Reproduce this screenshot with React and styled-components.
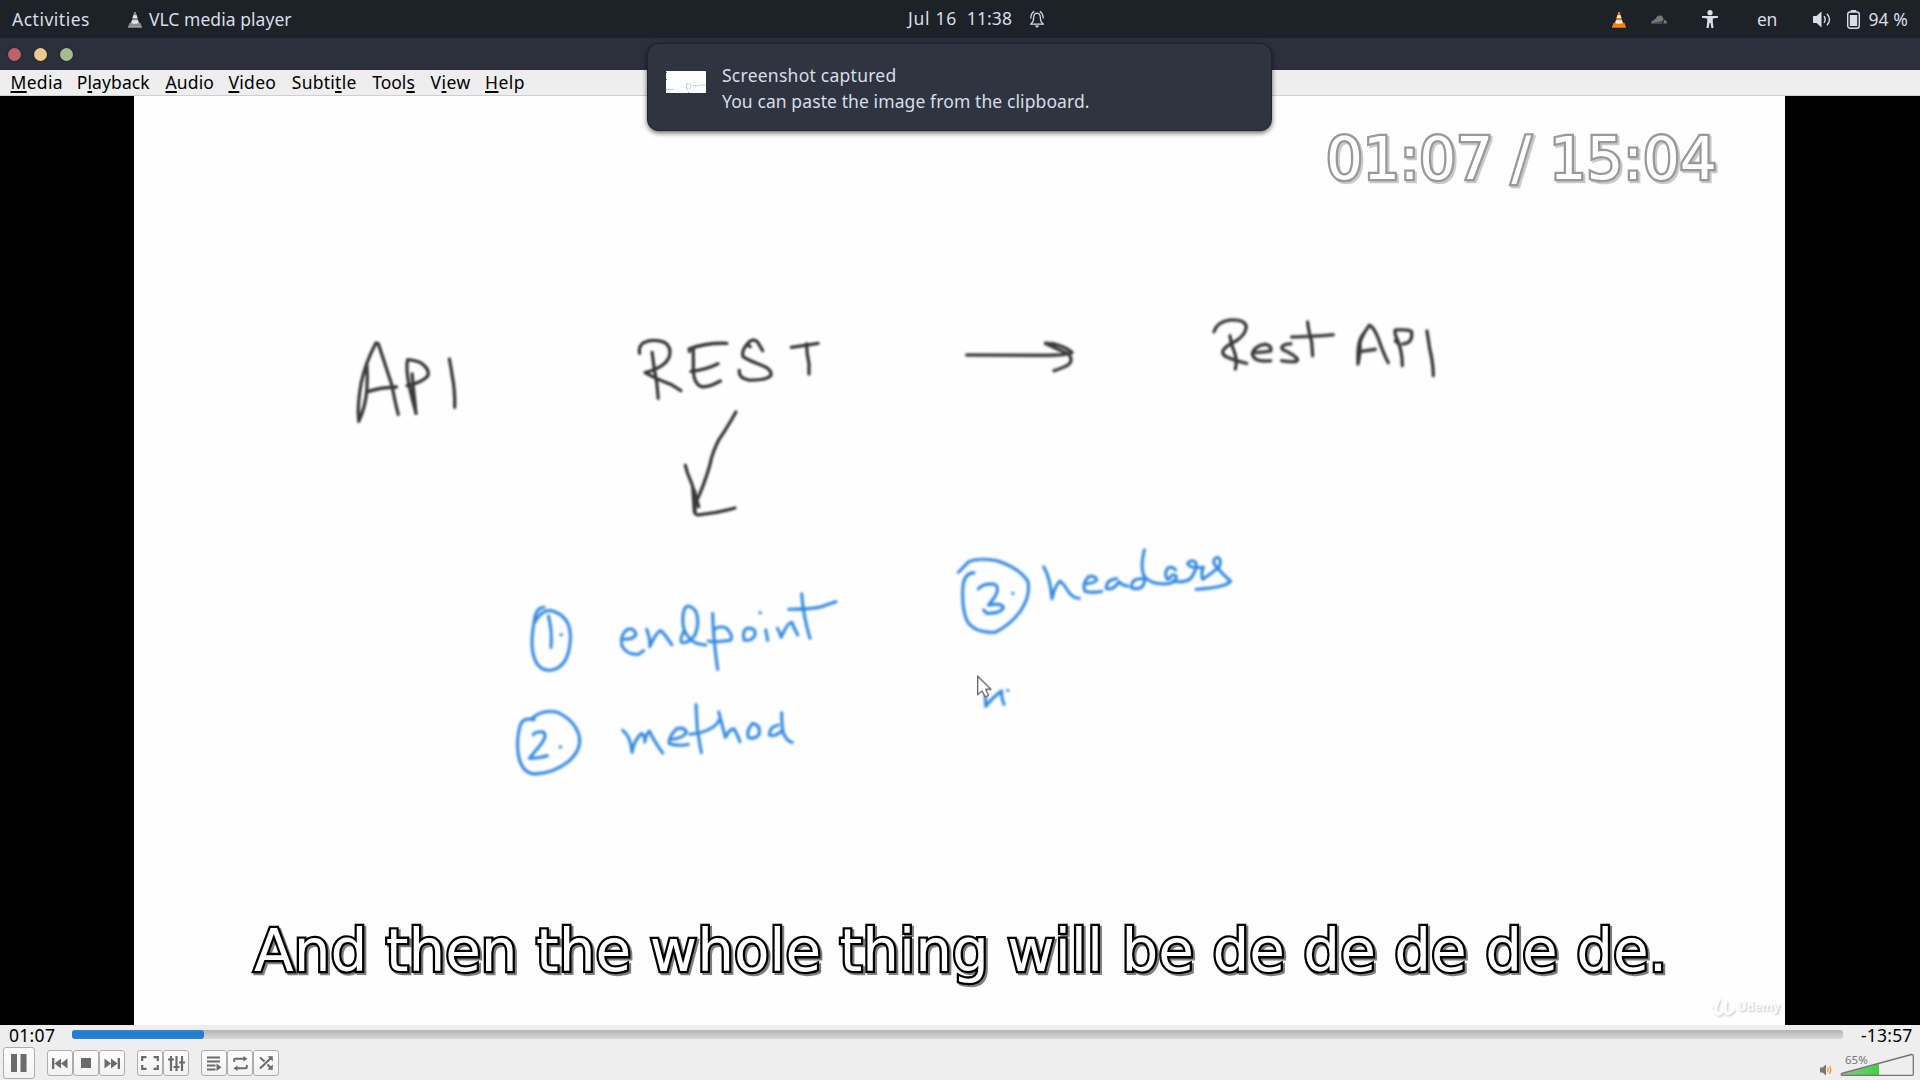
import React from "react";
import styled, { createGlobalStyle } from "styled-components";

const ui = '"Noto Sans", "Open Sans", sans-serif';
const video = '"DejaVu Sans", sans-serif';

const Global = createGlobalStyle`
  * { box-sizing: border-box; }
  html, body { margin: 0; padding: 0; background: #000; overflow: hidden; }
  body { font-family: ${ui}; font-size: 17.5px; }
`;

const Screen = styled.div`
  width: 1920px;
  height: 1080px;
  display: flex;
  flex-direction: column;
  position: relative;
`;

const Label = styled.span`
  letter-spacing: ${(p) => p.$ls || 0}px;
  white-space: pre;
`;

/* ---------- desktop bar ---------- */
const TopBar = styled.header`
  height: 38px;
  flex: none;
  display: grid;
  grid-template-columns: 1fr auto 1fr;
  align-items: center;
  background: #1d2128;
  color: #d8dee9;
  line-height: 36px;
`;
const TopLeft = styled.div`
  display: flex;
  align-items: center;
  padding-left: 12px;
  gap: 7px;
  svg { margin-left: 31px; }
`;
const Clock = styled.div`
  display: flex;
  align-items: center;
  padding: 0 0 2px 32px;
`;
const ClockText = styled.div`
  width: 104px;
  display: flex;
  justify-content: space-between;
`;
const BellSlot = styled.div`
  width: 32px;
  display: flex;
  justify-content: flex-end;
  padding-top: 2px;
`;
const TopRight = styled.div`
  display: flex;
  align-items: center;
  justify-content: flex-end;
  padding-right: 12px;
`;
const Slot = styled.div`
  width: ${(p) => p.$w}px;
  margin-right: ${(p) => p.$mr || 0}px;
  display: flex;
  white-space: nowrap;
`;

/* ---------- window chrome ---------- */
const TitleBar = styled.div`
  height: 32px;
  flex: none;
  background: #2b303b;
  display: flex;
  align-items: center;
  gap: 13px;
  padding-left: 7.5px;
`;
const Light = styled.i`
  width: 13px;
  height: 13px;
  border-radius: 50%;
  background: ${(p) => p.$c};
  box-shadow: 0 0 1px 0.5px rgba(20, 24, 32, 0.6);
`;
const MenuBar = styled.nav`
  height: 26px;
  flex: none;
  background: #eeeeee;
  border-bottom: 1px solid #cfcfcf;
  display: flex;
  padding-left: 10.5px;
  gap: 16px;
  color: #000;
  line-height: 25px;
`;
const MenuItem = styled.span`
  width: ${(p) => p.$w}px;
  letter-spacing: ${(p) => p.$ls}px;
  white-space: nowrap;
  u {
    text-decoration: underline;
    text-decoration-thickness: 2px;
    text-underline-offset: 2px;
    text-decoration-skip-ink: none;
  }
`;

/* ---------- video ---------- */
const Stage = styled.main`
  height: 929px;
  flex: none;
  display: flex;
  justify-content: flex-start;
  padding-left: 134px;
  background: #000;
`;
const Board = styled.div`
  width: 1651px;
  height: 929px;
  background: #fefefe;
  position: relative;
`;
const Ink = styled.svg`
  display: block;
  width: 1651px;
  height: 929px;
  fill: none;
  stroke-linecap: round;
  stroke-linejoin: round;
  path { vector-effect: non-scaling-stroke; }
`;
const Osd = styled.div`
  position: absolute;
  font: 58px/68px ${video};
  color: #fff;
  white-space: nowrap;
  -webkit-text-stroke: 4.6px #000;
  paint-order: stroke fill;
  filter: drop-shadow(2.5px 2.5px 0 rgba(0, 0, 0, 0.5));
`;
const Timer = styled(Osd)`
  left: 1192px;
  top: 29px;
  -webkit-text-stroke-color: #999;
  filter: drop-shadow(2.5px 2.5px 0 #cacaca);
`;
const Caption = styled(Osd)`
  left: 120px;
  top: 821px;
`;
const Watermark = styled.div`
  position: absolute;
  right: 5px;
  bottom: 8px;
  display: flex;
  align-items: center;
  gap: 3px;
  color: #fcfcfc;
  font: bold 12px/20px ${ui};
  text-shadow: 1px 1px 2px rgba(0, 0, 0, 0.25);
  svg { filter: drop-shadow(1px 1px 1px rgba(0, 0, 0, 0.22)); }
`;

/* ---------- notification ---------- */
const Toast = styled.aside`
  position: absolute;
  left: 648px;
  top: 44px;
  width: 623px;
  height: 86px;
  border-radius: 11px;
  background: #2e3440;
  color: #d8dee9;
  box-shadow: 0 0 0 1px #20242c, 0 2px 5px 1px rgba(0, 0, 0, 0.6);
  display: flex;
  padding: 18px;
  gap: 16px;
`;
const Thumb = styled.svg`
  width: 40px;
  height: 22px;
  margin-top: 9px;
  background: #fff;
`;
const ToastText = styled.div`
  display: flex;
  flex-direction: column;
  line-height: 26px;
`;

/* ---------- player controls ---------- */
const Controls = styled.footer`
  height: 55px;
  flex: none;
  background: #eeeeee;
  color: #000;
`;
const SeekRow = styled.div`
  height: 21px;
  display: flex;
  align-items: flex-start;
  line-height: 20px;
  padding-left: 9px;
`;
const Time = styled.span`
  width: ${(p) => p.$w}px;
  letter-spacing: ${(p) => p.$ls}px;
`;
const Track = styled.div`
  width: 1771px;
  height: 9px;
  margin: 5px 18px 0 0;
  border-radius: 3px;
  background: linear-gradient(#b4b4b4, #d8d8d8);
`;
const Progress = styled.div`
  width: 132px;
  height: 9px;
  border-radius: 3px;
  background: linear-gradient(#3a86d0, #1f7bd2 30%, #2a80d0);
`;
const ButtonRow = styled.div`
  height: 34px;
  display: flex;
  align-items: center;
  padding-left: 3px;
  gap: 12px;
`;
const Group = styled.div`display: flex;`;
const Btn = styled.button`
  width: ${(p) => p.$s}px;
  height: ${(p) => p.$s}px;
  padding: 0;
  border: 1px solid #adadad;
  border-radius: 3px;
  background: linear-gradient(#ffffff, #f2f2f2);
  display: flex;
  align-items: center;
  justify-content: center;
  color: #6b6b6b;
`;
const Volume = styled.svg`
  margin-left: auto;
  margin-right: 4px;
  width: 98px;
  height: 28px;
`;

const Cone = ({ a, b, c }) => (
  <svg width="14" height="17" viewBox="0 0 14 17">
    <path d="M1.6 11.8h10.8l1.6 4.4H0z" fill={a} />
    <path d="M6.2 1h1.6l3 11.2q-3.8 2-7.6 0z" fill={a} />
    <path d="M5.3 4.2h3.4l.8 2.8H4.5zM3.9 9.3h6.2l.7 2.6q-3.8 1.8-7.6 0z" fill={b} />
    <path d="M0 15.6h14v.9H0z" fill={c} />
  </svg>
);

const menu = [
  [["", "M", "edia"], 50.3, 0.3],
  [["P", "l", "ayback"], 72.7, 0.1],
  [["", "A", "udio"], 47, 0.15],
  [["", "V", "ideo"], 47.3, 0.3],
  [["Subti", "t", "le"], 64.4, 0.25],
  [["Tool", "s", ""], 42.3, 0],
  [["V", "i", "ew"], 38.5, 0.5],
  [["", "H", "elp"], 42, 0.5],
];

const black = {
  left: [
    "M85 334Q80 290 92 220Q104 160 136 99L143 101L183 225Q192 275 202 313M85 334Q105 290 109 240Q112 200 109 165M112 245Q150 232 197 231",
    "M255 310Q235 240 229 195Q226 160 230 149Q270 153 280 168Q294 183 290 196Q280 215 228 227M243 192Q246 230 251 275L254 310",
    "M353 147Q358 170 362 200Q370 240 369 292",
    "M916 130Q912 108 928 98Q955 85 990 97Q1012 112 1004 140Q992 172 932 188Q965 207 1010 224L1038 242M953 127Q958 175 967 220L971 265",
    "M1064 125L1062 117Q1110 98 1174 100M1075 120L1075 185Q1078 222 1097 229Q1115 235 1155 213M1068 184Q1110 180 1148 161",
    "M1243 110L1236 104M1280 122L1265 96Q1252 84 1240 96Q1216 120 1222 140Q1235 150 1275 165Q1310 178 1304 197Q1290 212 1238 210Q1208 205 1211 181",
    "M1365 112L1444 100M1410 101Q1410 130 1417 160L1417 192",
    "M1201 306Q1180 345 1150 390Q1130 430 1124 465Q1105 530 1085 572M1051 466L1058 490Q1075 530 1082 560L1091 590M1073 530L1078 605Q1080 617 1095 614Q1140 610 1180 599L1198 594M1080 545L1080 608",
  ],
  right: [
    "M80 165L320 166Q375 165 396 158M316 130L340 131Q380 142 396 157M316 130L385 162Q402 180 385 194Q370 203 342 212",
    "M822 95Q832 65 870 60Q915 57 919 80Q916 110 875 130Q835 152 855 168Q880 180 920 190M870 107Q872 130 883 155Q893 180 886 207",
    "M940 157Q970 158 992 153Q997 136 975 133Q945 138 937 160Q940 188 992 182",
    "M1053 131Q1020 133 1027 148Q1065 165 1073 178Q1072 190 1025 182",
    "M1055 111Q1110 110 1180 104M1103 66Q1105 90 1115 125L1118 167",
    "M1254 192L1254 160Q1257 115 1288 76Q1300 78 1315 115Q1330 160 1345 188M1270 102Q1255 120 1254 160M1258 155L1306 148M1254 192Q1262 160 1260 120",
    "M1387 197Q1388 160 1373 120Q1362 98 1366 90Q1405 87 1415 95Q1420 128 1388 132M1366 122L1372 128",
    "M1461 93Q1467 130 1469 145Q1480 190 1480 227",
  ],
};
const blue = {
  left: [
    "M132 202Q108 202 103 240Q92 300 98 335Q108 392 150 391Q205 385 211 300Q215 225 150 211Q125 210 105 245M145 228Q157 270 153 322M183 284h1",
    "M368 297Q400 300 408 283Q402 262 382 268Q358 285 366 318Q380 345 415 343L431 332",
    "M440 268Q452 300 449 320Q470 275 482 272Q492 278 515 314",
    "M552 272Q538 300 545 307Q565 312 585 285Q600 250 588 215Q570 190 555 203Q543 230 552 268Q565 300 590 310L617 315",
    "M638 220Q640 300 653 388M625 303Q640 308 690 301Q703 290 680 265Q660 255 643 268",
    "M740 265Q725 275 733 300Q755 305 765 285Q768 262 742 265",
    "M797 270L803 301M780 218h1",
    "M832 265Q842 280 843 292Q865 245 875 247Q883 265 893 285",
    "M905 162Q910 230 930 295M866 208Q950 208 975 196L1008 185",
    "M102 539Q68 530 60 558Q48 600 55 645Q65 700 105 702Q160 700 205 665Q245 630 238 590Q225 540 170 516Q125 508 95 536",
    "M100 584Q105 574 130 576Q142 585 125 610L88 655Q120 655 142 647M181 621h1",
    "M368 571Q392 588 396 637Q402 600 425 580Q437 592 434 606Q438 582 448 573Q460 600 488 639",
    "M510 597Q540 600 560 578Q555 560 530 566Q505 590 507 610Q530 620 565 613",
    "M588 494L592 570L604 638M570 583Q640 575 658 540",
    "M656 516Q668 560 676 592Q690 565 702 567Q710 580 720 605",
    "M755 553Q738 575 745 592Q765 600 778 582Q782 555 758 550",
    "M835 555Q808 560 808 585Q825 592 845 572M845 518Q845 560 850 580Q862 605 877 607",
  ],
  right: [
    "M55 127L85 96Q110 82 170 92Q240 115 264 155Q272 200 240 245Q210 285 165 307Q100 308 80 270Q64 230 69 165Q75 128 102 128",
    "M115 177Q130 158 165 163Q180 172 165 200L145 225Q185 218 190 232Q185 250 140 250L131 240M218 190h1",
    "M311 111Q330 140 336 206Q345 165 360 153Q375 165 385 185Q400 205 418 205",
    "M432 162Q465 160 470 150Q468 135 445 140Q425 165 435 183Q455 190 485 184",
    "M530 146Q498 150 499 175Q520 182 537 155Q548 168 563 168",
    "M605 146Q575 145 573 172Q595 182 608 168Q618 152 612 138M613 60Q600 110 612 138Q635 168 690 160Q712 152 708 138Q698 128 688 146",
    "M707 120Q695 106 682 116Q672 132 682 148M700 153Q735 160 752 145Q772 120 768 98Q755 86 743 100Q748 116 790 112",
    "M790 112Q782 130 788 148Q815 130 838 110Q847 85 830 82Q815 90 825 105Q850 135 872 153Q860 172 768 178",
    "M136 495L137 529Q160 500 185 483Q183 500 192 523M203 481h1",
  ],
};

const strokes = (list) => list.map((d) => <path key={d} d={d} />);

export default function App() {
  return (
    <Screen>
      <Global />
      <TopBar>
        <TopLeft>
          <Label $ls={0.5}>Activities</Label>
          <Cone a="#8c8c8c" b="#e4e4e4" c="#b5b5b5" />
          <Label $ls={0.05}>VLC media player</Label>
        </TopLeft>
        <Clock>
          <ClockText>
            <Label $ls={0.7}>Jul 16</Label>
            <Label $ls={0.1}>11:38</Label>
          </ClockText>
          <BellSlot>
            <svg width="14" height="18" viewBox="0 0 14 18" fill="none" stroke="#d8dee9" strokeWidth="1.2">
              <path d="M1.200 13.700Q3.600 12 3.700 7.500Q3.800 3.400 7 3.200Q10.200 3.400 10.300 7.500Q10.400 12 12.800 13.700" />
              <path d="M0 14.200H14M.8 8.500Q.8 3.200 4.200 1.400M13.200 8.500Q13.200 3.200 9.800 1.400" />
              <path d="M4.800 15.600H9.200L7.600 17.400H6.400Z" fill="#d8dee9" stroke="none" />
            </svg>
          </BellSlot>
        </Clock>
        <TopRight>
          <Slot $w={14} $mr={25}><Cone a="#ee7f0e" b="#f0ece6" c="#ff9d1c" /></Slot>
          <Slot $w={16} $mr={35}>
            <svg width="16" height="9" viewBox="0 0 16 9" fill="#777775">
              <path d="M0 8.500Q.2 5.500 3 5.200Q3.500 3.800 4.800 3.800Q6 .4 9 .5Q12 .7 12.600 4.200L11.500 6.500L1 7.500L11 7.600V8.500ZM12.200 8.500L13.200 4.800Q16 5.500 16 8.500Z" />
            </svg>
          </Slot>
          <Slot $w={16} $mr={39}>
            <svg width="16" height="18" viewBox="0 0 16 18" fill="#d8dee9">
              <circle cx="8" cy="2.700" r="2.600" />
              <path d="M0 6H16V7.700L10.800 8.500V12L11.500 18H9.400L8.500 13H7.500L6.600 18H4.500L5.200 12V8.500L0 7.700Z" />
            </svg>
          </Slot>
          <Slot $w={22} $mr={34}><Label $ls={-0.3}>en</Label></Slot>
          <Slot $w={18} $mr={16}>
            <svg width="18" height="17" viewBox="0 0 18 17">
              <path d="M0 5.500Q0 5 .6 5H3.500L8.500 .5V16.500L3.500 12H.6Q0 12 0 11.500Z" fill="#d8dee9" />
              <path d="M11 5.200Q13.400 8.500 11 11.800M14 2.800Q19 8.500 14 14.200" fill="none" stroke="#d8dee9" strokeWidth="1.400" />
            </svg>
          </Slot>
          <Slot $w={13} $mr={8.500}>
            <svg width="13" height="19" viewBox="0 0 13 19">
              <rect x="3.500" y="0" width="6" height="2" rx="1" fill="#d8dee9" />
              <rect x=".7" y="2" width="11.600" height="16.200" rx="2.500" fill="none" stroke="#d8dee9" strokeWidth="1.400" />
              <rect x="2.800" y="5" width="7.400" height="11" fill="#d8dee9" />
            </svg>
          </Slot>
          <Slot $w={39.500}><Label $ls={0.1}>94 %</Label></Slot>
        </TopRight>
      </TopBar>

      <TitleBar>
        <Light $c="#bf616a" />
        <Light $c="#ebcb8b" />
        <Light $c="#a3be8c" />
      </TitleBar>

      <MenuBar>
        {menu.map(([[a, k, b], w, ls]) => (
          <MenuItem key={a + k + b} $w={w} $ls={ls}>{a}<u>{k}</u>{b}</MenuItem>
        ))}
      </MenuBar>

      <Stage>
        <Board>
          <Ink viewBox="134 96 1651 929">
            <defs>
              <filter id="soft" x="-5%" y="-5%" width="110%" height="110%"><feGaussianBlur stdDeviation="0.85" /></filter>
            </defs>
            <g filter="url(#soft)">
              <g stroke="#37383a" strokeWidth="3.300">
                <g transform="translate(330 310) scale(.338 .3333)">{strokes(black.left)}</g>
                <g transform="translate(940 300) scale(.3333)">{strokes(black.right)}</g>
              </g>
              <g stroke="#358ae0" strokeWidth="3.100">
                <g transform="translate(500 540) scale(.3333)">{strokes(blue.left)}</g>
                <g transform="translate(940 530) scale(.3333)">{strokes(blue.right)}</g>
              </g>
            </g>
            <path transform="translate(940 530) scale(.3333)" d="M113 438V494L126 483L136 501L146 496L137 478H153Z" fill="#fff" stroke="#666" strokeWidth="1.300" />
          </Ink>
          <Timer>01:07 / 15:04</Timer>
          <Caption>And then the whole thing will be de de de de de.</Caption>
          <Watermark>
            <svg width="24" height="20" viewBox="0 0 24 20" fill="none" stroke="#fcfcfc" strokeWidth="3.500" strokeLinecap="round">
              <path d="M2 9Q7 6 8 2Q4 11 5 15Q8 20 13 12L15 4Q13 12 15 16Q18 18 22 13" />
            </svg>
            <span>Udemy</span>
          </Watermark>
        </Board>
      </Stage>

      <Controls>
        <SeekRow>
          <Time $w={63} $ls={0.3}>01:07</Time>
          <Track><Progress /></Track>
          <Time $w={52} $ls={0.2}>-13:57</Time>
        </SeekRow>
        <ButtonRow>
          <Btn $s={32}>
            <svg width="16" height="18" viewBox="0 0 16 18" fill="currentColor"><path d="M0 0H6V18H0ZM9.500 0H15.500V18H9.500Z" /></svg>
          </Btn>
          <Group>
            <Btn $s={26}>
              <svg width="16" height="11" viewBox="0 0 16 11" fill="currentColor"><path d="M0 0H2.300V11H0ZM9 .5V10.500L2.500 5.500ZM15.500 .5V10.500L9 5.500Z" /></svg>
            </Btn>
            <Btn $s={26}>
              <svg width="10" height="10" viewBox="0 0 10 10" fill="currentColor"><path d="M0 0H10V10H0Z" /></svg>
            </Btn>
            <Btn $s={26}>
              <svg width="16" height="11" viewBox="0 0 16 11" fill="currentColor"><path d="M13.700 0H16V11H13.700ZM.5 .5V10.500L7 5.500ZM7 .5V10.500L13.500 5.500Z" /></svg>
            </Btn>
          </Group>
          <Group>
            <Btn $s={26}>
              <svg width="18" height="14" viewBox="0 0 18 14" fill="none" stroke="currentColor" strokeWidth="2.200"><path d="M1.200 5V1.200H5.500M12.500 1.200H16.800V5M16.800 9V12.800H12.500M5.500 12.800H1.200V9" /></svg>
            </Btn>
            <Btn $s={26}>
              <svg width="17" height="15" viewBox="0 0 17 15" fill="none" stroke="currentColor" strokeWidth="2.200"><path d="M3 0V15M8.500 0V15M14 0V15" /><path d="M0 3.500H6M5.500 11H11.500M11 6.500H17" /></svg>
            </Btn>
          </Group>
          <Group>
            <Btn $s={26}>
              <svg width="16" height="15" viewBox="0 0 16 15" fill="none" stroke="currentColor" strokeWidth="2"><path d="M1 1.500H14M1 5.500H14M1 9.500H9.500M1 13.500H9.500" /><path d="M10.500 7.500V15L15.500 11.200Z" fill="currentColor" stroke="none" /></svg>
            </Btn>
            <Btn $s={26}>
              <svg width="15" height="15" viewBox="0 0 15 15" fill="none" stroke="currentColor" strokeWidth="1.900"><path d="M1.200 6V3.500Q1.200 2.800 2 2.800H12M13.800 9V11.500Q13.800 12.200 13 12.200H3" /><path d="M10.500 0L14.500 2.800L10.500 5.600ZM4.500 9.400L.5 12.200L4.500 15Z" fill="currentColor" stroke="none" /></svg>
            </Btn>
            <Btn $s={26}>
              <svg width="14" height="14" viewBox="0 0 14 14" fill="none" stroke="currentColor" strokeWidth="2"><path d="M1 1.500L5.500 5.500M8.500 8.500L12 12M1 12.500L12 2" /><path d="M8.500 .2H13.800V5.500ZM13.800 8.500V13.800H8.500Z" fill="currentColor" stroke="none" /></svg>
            </Btn>
          </Group>
          <Volume viewBox="1818 1051 98 28">
            <defs>
              <linearGradient id="level" x1="0" x2="1" y1="0" y2="0"><stop offset="0" stopColor="#8fc48f" /><stop offset="1" stopColor="#3fd33f" /></linearGradient>
            </defs>
            <path d="M1820 1069.500H1822.500L1826 1066.500V1077.500L1822.500 1074.500H1820Z" fill="#777" />
            <path d="M1827.500 1069.500Q1829 1072 1827.500 1074.500M1829.500 1068Q1832 1072 1829.500 1076" fill="none" stroke="#f39a24" strokeWidth="1.300" />
            <path d="M1841 1076L1879 1066V1077H1841Z" fill="url(#level)" />
            <path d="M1841.500 1075.500L1911.500 1056.500Q1913.300 1056.300 1913.300 1058V1076Q1913.300 1077.300 1912 1077.300H1842.500Q1840.500 1077 1841.500 1075.500Z" fill="none" stroke="#747474" strokeWidth="1.300" />
            <text x="1845" y="1065.500" fontFamily={ui} fontSize="11.500" fill="#777">65%</text>
          </Volume>
        </ButtonRow>
      </Controls>

      <Toast>
        <Thumb viewBox="0 0 40 22" fill="none" stroke="#5b9fdc" strokeWidth=".8" strokeDasharray="1.200 .9">
          <path d="M0 18.500H8M20.500 13Q25 11.500 25 16Q24 19 20.500 18ZM27 14.500L32 15L36 14H40M22 21.500H24" />
          <path d="M0 1.500H1M0 8.500H1" stroke="#444" />
        </Thumb>
        <ToastText>
          <Label $ls={0.25}>Screenshot captured</Label>
          <Label $ls={0.1}>You can paste the image from the clipboard.</Label>
        </ToastText>
      </Toast>
    </Screen>
  );
}
